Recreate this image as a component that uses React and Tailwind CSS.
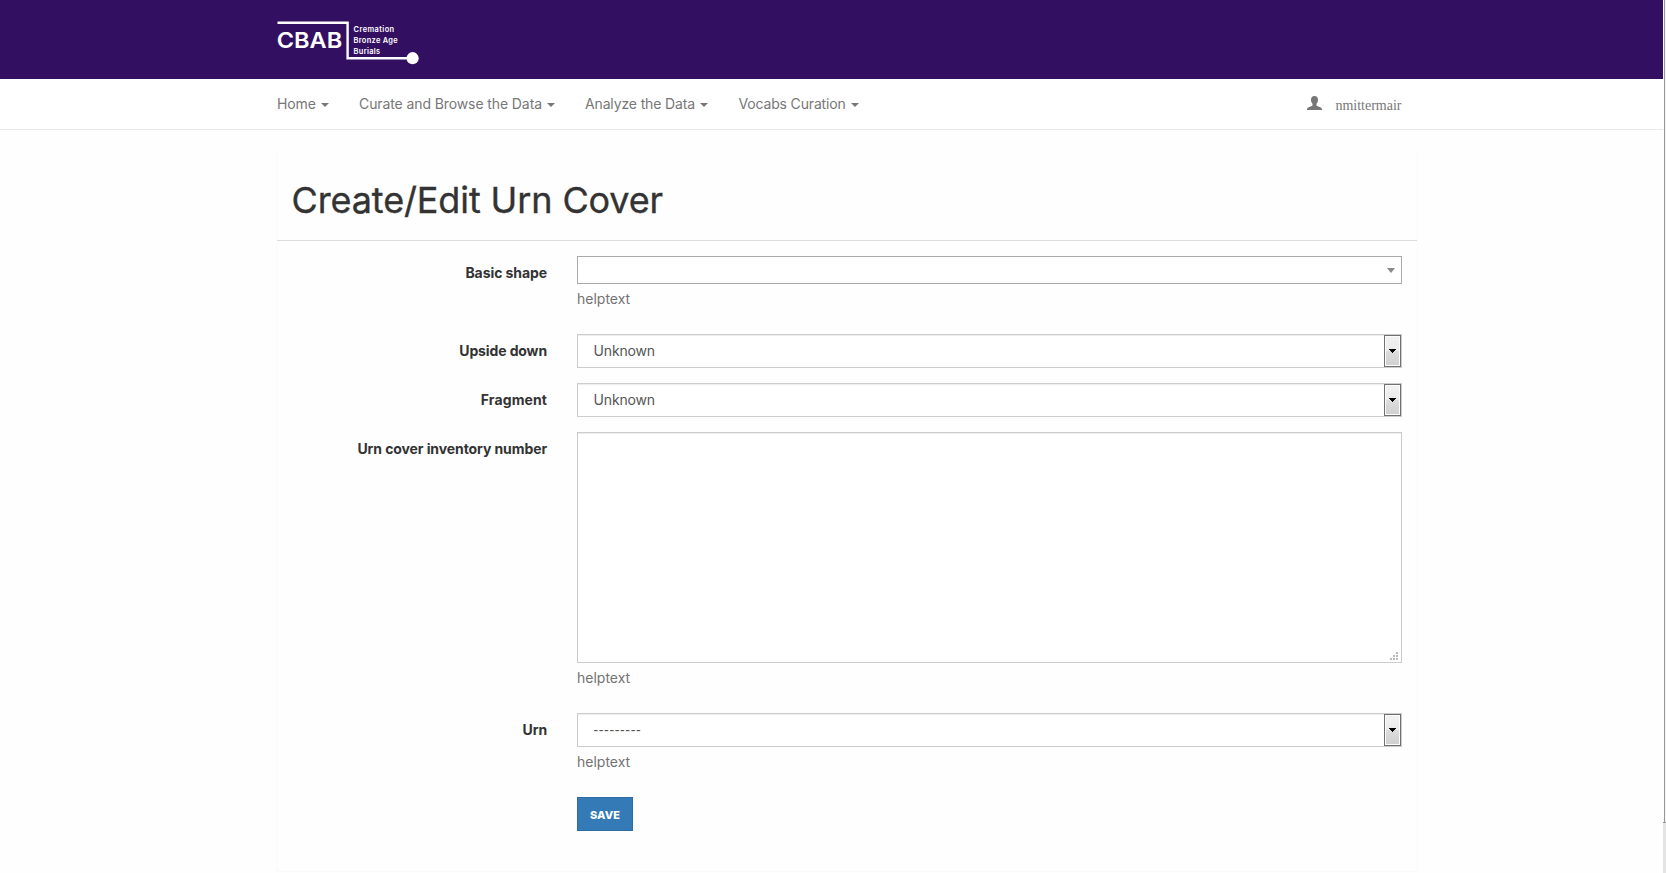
import React from "react";

const navItems = [
  { label: "Home", width: "w-[82px]", tracking: "tracking-[-0.1px]" },
  { label: "Curate and Browse the Data", width: "w-[226px]", tracking: "tracking-[-0.1px]" },
  { label: "Analyze the Data", width: "w-[153.5px]", tracking: "tracking-[-0.14px]" },
  { label: "Vocabs Curation", width: "w-[140px]", tracking: "tracking-[-0.16px]" },
];

function Logo() {
  return (
    <svg
      className="block h-[50px] w-[150px] fill-white font-['Inter',sans-serif]"
      viewBox="277 17 150 50"
    >
      <path d="M277.5 22.8H347.6V58.2H412" fill="none" stroke="white" strokeWidth="2.4" />
      <circle cx="412.6" cy="58.2" r="6.1" />
      <text x="276.7" y="47.8" fontSize="22" fontWeight="600" textLength="65.5" lengthAdjust="spacingAndGlyphs">CBAB</text>
      <g fontSize="7.4" fontWeight="600">
        <text x="353.6" y="32" textLength="40.5">Cremation</text>
        <text x="353.6" y="42.8" textLength="44">Bronze Age</text>
        <text x="353.6" y="53.7" textLength="26.5">Burials</text>
      </g>
    </svg>
  );
}

function Caret() {
  return (
    <svg className="mt-px ml-[5px] h-1 w-2 shrink-0 fill-[#777]" viewBox="0 0 8 4">
      <path d="M0 0H8L4 4Z" />
    </svg>
  );
}

function Row({ label, tracking, className = "", children }) {
  return (
    <div className={`flex pr-[15px] ${className}`}>
      <label className={`w-[270px] shrink-0 pt-[7px] text-right font-bold text-[#333] ${tracking}`}>
        {label}
      </label>
      <div className="ml-[30px] min-w-0 flex-1">{children}</div>
    </div>
  );
}

function Help() {
  return <p className="mt-[5px] text-[#737373]">helptext</p>;
}

function NativeSelect({ value, tracking }) {
  return (
    <div className="flex h-[34px] justify-between border border-[#ccc] bg-white shadow-[inset_0_1px_1px_rgba(0,0,0,0.075)]">
      <span className={`pt-[6px] pl-[15.5px] text-[#555] ${tracking}`}>{value}</span>
      <span className="flex w-[17px] items-center justify-center border border-[#707070] bg-[linear-gradient(#f2f2f2,#ebebeb_50%,#dddddd_50%,#cfcfcf)] shadow-[inset_0_0_0_1px_#fcfcfc]">
        <svg className="h-1 w-[7px] fill-black" viewBox="0 0 7 4" shapeRendering="crispEdges">
          <path d="M0 0H7V1H6V2H5V3H4V4H3V3H2V2H1V1H0Z" />
        </svg>
      </span>
    </div>
  );
}

export default function App() {
  return (
    <div className="flex h-[873px] w-[1666px] overflow-hidden bg-[#fefefe] font-['Inter',sans-serif] text-[14px] leading-5">
      <div className="flex w-[1663px] flex-col">
        <header className="h-[79px] shrink-0 bg-[#330f62] pt-[17px] pl-[277px]">
          <Logo />
        </header>
        <nav className="flex h-[51px] shrink-0 border-b border-[#e9e9e9] bg-white pt-[15px] pr-[261.5px] pl-[277px] text-[#777]">
          {navItems.map((item) => (
            <a key={item.label} className={`flex h-5 shrink-0 items-center whitespace-nowrap ${item.width} ${item.tracking}`}>
              {item.label}
              <Caret />
            </a>
          ))}
          <a className="ml-auto flex h-5 items-start">
            <svg className="mt-0.5 mr-[13px] h-[14px] w-[15px] fill-[#777]" viewBox="0 0 15 14">
              <path d="M7.5 0C9.8 0 11 1.5 11 3.8C11 5.4 10.4 6.8 9.5 7.8V9.4C11 10.5 15 11.4 15 13V14H0V13C0 11.4 4 10.5 5.5 9.4V7.8C4.6 6.8 4 5.4 4 3.8C4 1.5 5.2 0 7.5 0Z" />
            </svg>
            <span className="pt-0.5 font-['Liberation_Serif',serif]">nmittermair</span>
          </a>
        </nav>

        <main className="mt-5 ml-[276px] h-[722px] w-[1142px] shrink-0 border border-t-0 border-[#fafafa] bg-[#fefefe]">
          <h1 className="h-[91px] border-b border-[#ddd] pt-[28px] pl-[14.5px] text-[36px] leading-[44px] tracking-[-0.12px] text-[#333] [-webkit-text-stroke:0.35px_#333]">
            Create/Edit Urn Cover
          </h1>
          <form className="pt-[15px]">
            <Row label="Basic shape" tracking="tracking-[-0.08px]" className="h-[78px]">
              <div className="flex h-7 items-center justify-end border border-[#aaa] bg-white pr-[6px]">
                <svg className="h-[5px] w-2 fill-[#888]" viewBox="0 0 8 5">
                  <path d="M0 0H8L4 5Z" />
                </svg>
              </div>
              <Help />
            </Row>
            <Row label="Upside down" tracking="tracking-[-0.12px]" className="h-[49px]">
              <NativeSelect value="Unknown" tracking="tracking-[-0.15px]" />
            </Row>
            <Row label="Fragment" tracking="tracking-[0.1px]" className="h-[49px]">
              <NativeSelect value="Unknown" tracking="tracking-[-0.15px]" />
            </Row>
            <Row label="Urn cover inventory number" tracking="tracking-[-0.09px]" className="h-[281px]">
              <div className="flex h-[231px] items-end justify-end border border-[#ccc] bg-white pr-[3px] pb-0.5 shadow-[inset_0_1px_1px_rgba(0,0,0,0.075)]">
                <svg className="h-2 w-2 fill-[#bbb]" viewBox="0 0 8 8" shapeRendering="crispEdges">
                  <path d="M6 0h2v2h-2zM3 3h2v2h-2zM6 3h2v2h-2zM0 6h2v2h-2zM3 6h2v2h-2zM6 6h2v2h-2z" />
                </svg>
              </div>
              <Help />
            </Row>
            <Row label="Urn" tracking="tracking-[-0.1px]" className="h-[84px]">
              <NativeSelect value="---------" tracking="font-['Liberation_Sans',sans-serif] tracking-[0.65px]" />
              <Help />
            </Row>
            <button
              type="button"
              className="ml-[300px] flex h-[34px] w-14 items-center justify-center border border-[#2e6da4] bg-[#337ab7] pt-0.5 text-[11px] font-extrabold tracking-[0.1px] text-white"
            >
              SAVE
            </button>
          </form>
        </main>
      </div>
      <div className="flex w-[3px] flex-col bg-[#e4e4e4]">
        <div className="h-[823px] border-b border-[#979797] bg-white pl-px">
          <div className="h-full border-l border-[#979797] bg-[#f5f5f5]" />
        </div>
      </div>
    </div>
  );
}
